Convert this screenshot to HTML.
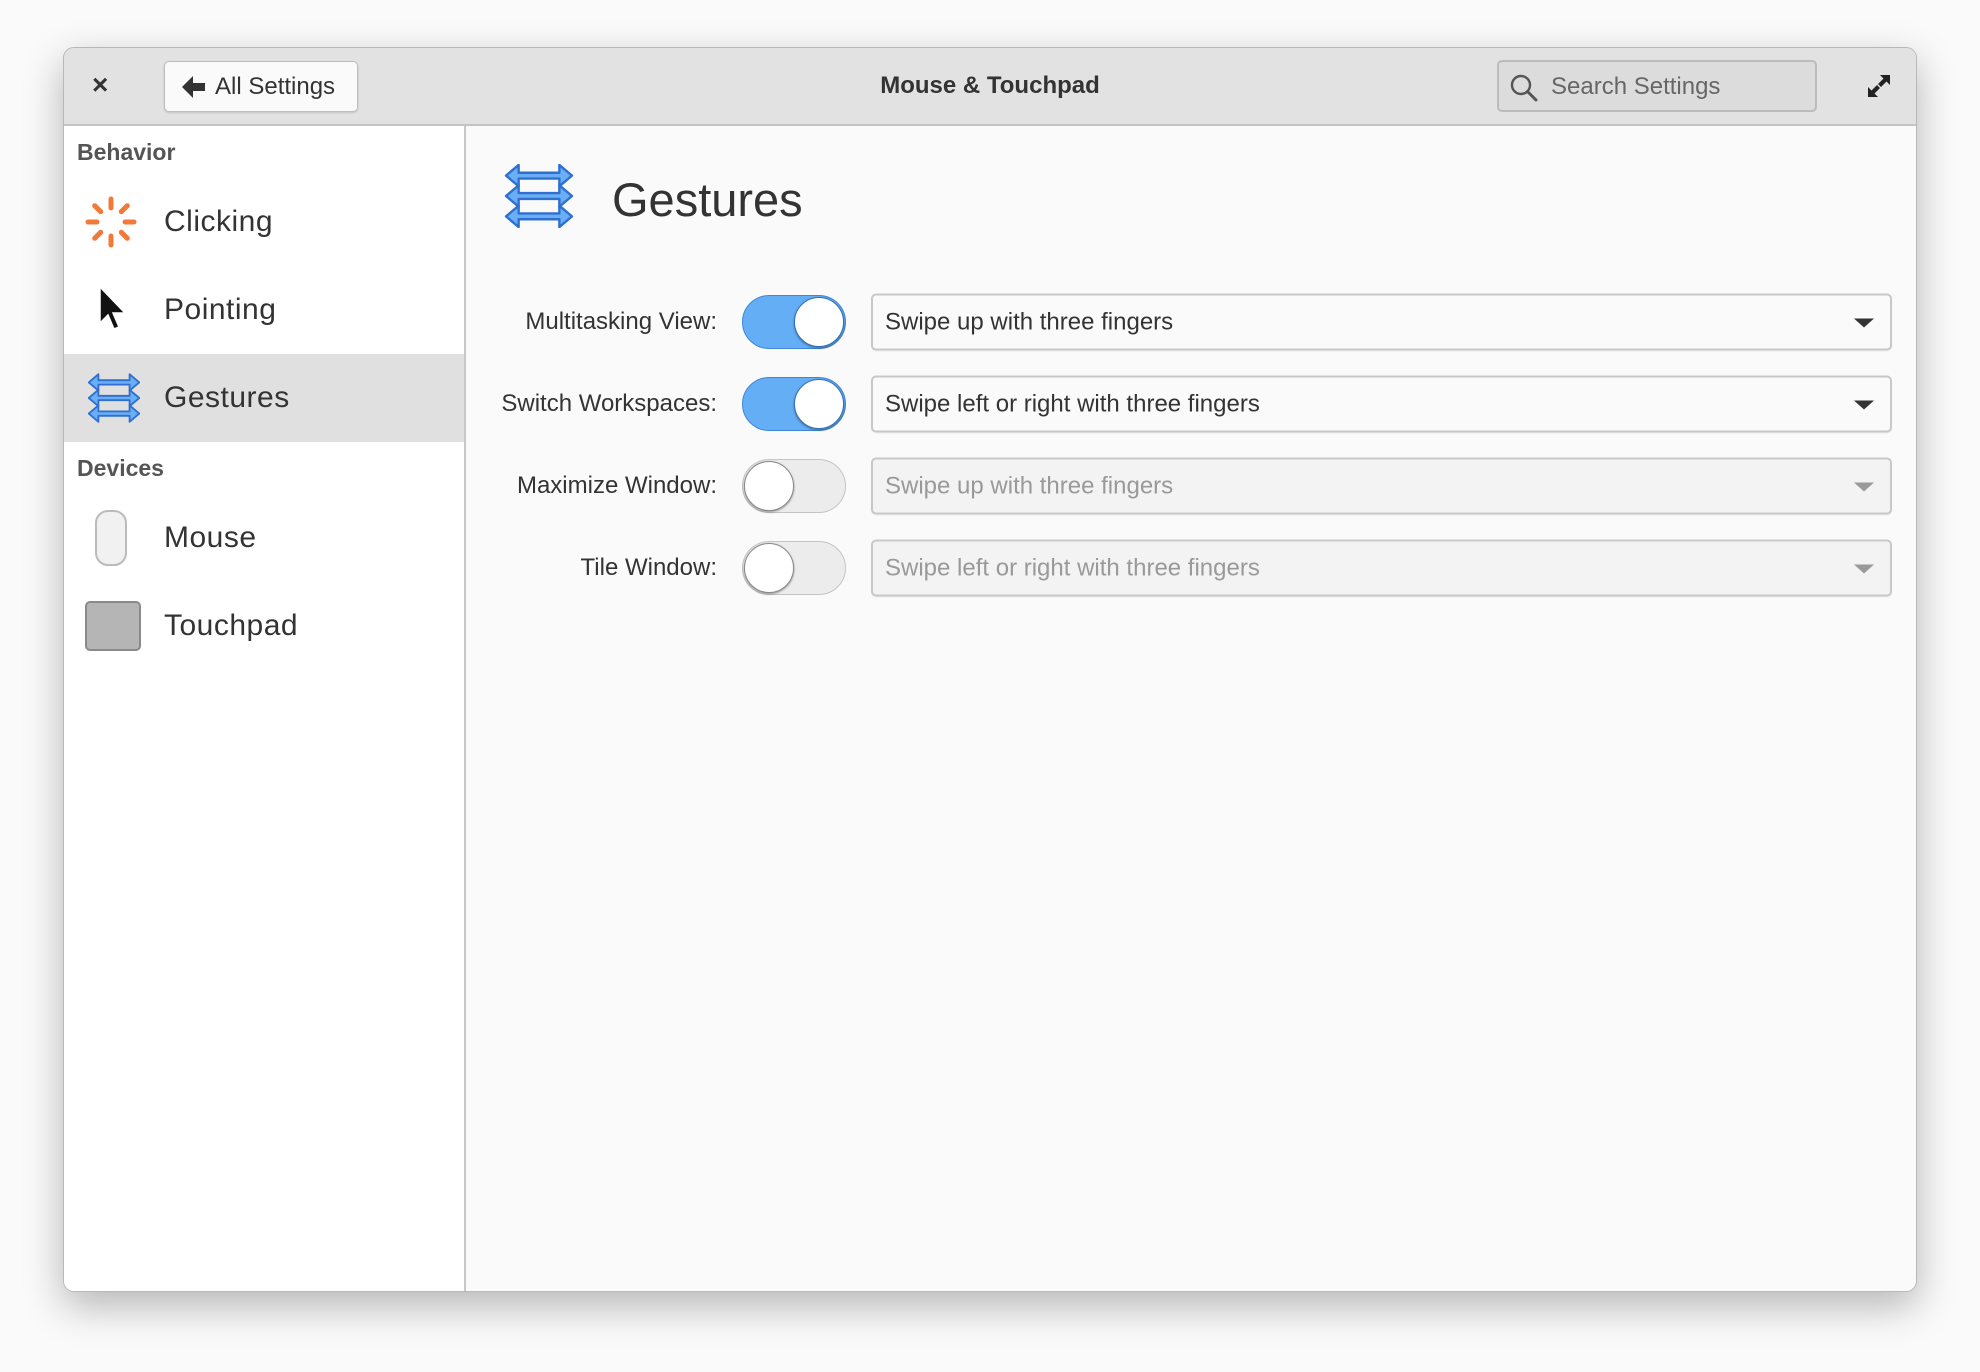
<!DOCTYPE html>
<html><head><meta charset="utf-8"><style>
*{box-sizing:border-box;margin:0;padding:0}
body{width:1980px;height:1372px;background:#fafafa;font-family:"Liberation Sans",sans-serif;position:relative;overflow:hidden;color:#333}
.win{position:absolute;left:63px;top:47px;width:1854px;height:1245px;border-radius:11px;background:#fafafa;border:1px solid #b8b8b8;box-shadow:0 14px 40px rgba(0,0,0,.28);overflow:hidden}
.title{position:absolute;left:0;top:0;width:100%;height:78px;background:#e2e2e2;border-bottom:2px solid #c4c4c4}
.abs{position:absolute}
.side{position:absolute;left:0;top:78px;width:402px;bottom:0;background:#fff;border-right:2px solid #c8c8c8}
.hdr{position:absolute;left:13px;font-weight:bold;font-size:23px;color:#555}
.item{position:absolute;left:0;width:400px;height:88px}
.item span{position:absolute;left:100px;top:50%;transform:translateY(-50%);font-size:30px;color:#333;letter-spacing:.5px}
.item .ic{position:absolute;left:20px;top:50%;transform:translateY(-50%)}
.lbl{position:absolute;right:1199px;font-size:24px;color:#333;transform:translateY(-50%)}
.sw{position:absolute;left:678px;width:104px;height:54px;border-radius:27px;transform:translateY(-50%)}
.sw.on{background:#64aef6;border:1px solid #3f86d6}
.sw.off{background:#ececec;border:1px solid #c4c4c4}
.knob{position:absolute;top:1px;width:50px;height:50px;border-radius:50%;background:#fff;box-shadow:0 1px 2px rgba(0,0,0,.4)}
.on .knob{right:1px;border:1px solid #3470b8}
.off .knob{left:1px;border:1px solid #888}
.cb{position:absolute;left:807px;width:1021px;height:57px;border:2px solid #c8c8c8;border-radius:5px;background:#fafafa;transform:translateY(-50%);box-shadow:0 1px 1px rgba(0,0,0,.06)}
.cb span{position:absolute;left:12px;top:50%;transform:translateY(-50%);font-size:24px;color:#333}
.cb i{position:absolute;right:16px;top:23px;width:0;height:0;border-left:10px solid transparent;border-right:10px solid transparent;border-top:9px solid #333}
.cb.dis{background:#f3f3f3}
.cb.dis span{color:#999}
.cb.dis i{border-top-color:#999}
</style></head><body>
<div class="win">
 <div class="title">
  <div class="abs" style="left:28px;top:21px;font-size:28px;font-weight:bold;color:#333">×</div>
  <div class="abs" style="left:100px;top:13px;width:194px;height:51px;background:#fafafa;border:1px solid #bdbdbd;border-radius:5px;box-shadow:0 1px 2px rgba(0,0,0,.15)">
   <svg class="abs" style="left:16px;top:13px" width="26" height="24" viewBox="0 0 26 24"><path d="M12 1 L1 12 L12 23 L12 16 L24 16 L24 8 L12 8 Z" fill="#333"/></svg>
   <span class="abs" style="left:50px;top:11px;font-size:24px;color:#333">All Settings</span>
  </div>
  <div class="abs" style="left:0;width:100%;top:24px;text-align:center;font-size:24px;font-weight:bold;color:#333">Mouse &amp; Touchpad</div>
  <div class="abs" style="left:1433px;top:12px;width:320px;height:52px;background:#dcdcdc;border:2px solid #bcbcbc;border-radius:5px">
   <svg class="abs" style="left:10px;top:11px" width="30" height="30" viewBox="0 0 30 30"><circle cx="12" cy="12" r="9" fill="none" stroke="#555" stroke-width="2.4"/><path d="M18.5 18.5 L27 27" stroke="#555" stroke-width="3" stroke-linecap="round"/></svg>
   <span class="abs" style="left:52px;top:11px;font-size:24px;color:#666">Search Settings</span>
  </div>
  <svg class="abs" style="left:1802px;top:25px" width="26" height="26" viewBox="0 0 26 26"><path d="M14 2 L24 2 L24 12 L20.5 8.5 L15 14 L12 11 L17.5 5.5 Z M12 24 L2 24 L2 14 L5.5 17.5 L11 12 L14 15 L8.5 20.5 Z" fill="#222"/></svg>
 </div>
 <div class="side">
  <div class="hdr" style="top:13px">Behavior</div>
  <div class="item" style="top:52px">
   <svg class="ic" width="54" height="54" viewBox="0 0 54 54"><g stroke="#f07a3a" stroke-width="5" stroke-linecap="round"><path d="M27 4v9M27 41v9M4 27h9M41 27h9M10.7 10.7l6 6M37.3 37.3l6 6M43.3 10.7l-6 6M16.7 37.3l-6 6"/></g></svg>
   <span>Clicking</span></div>
  <div class="item" style="top:140px">
   <svg class="ic" style="left:34px" width="34" height="50" viewBox="0 0 34 50"><path d="M2 2 L2 38 L10 30 L16 44 L21 42 L15 28 L27 28 Z" fill="#111" stroke="#fff" stroke-width="1.5"/></svg>
   <span>Pointing</span></div>
  <div class="item" style="top:228px;background:#e0e0e0">
   <svg class="ic" style="left:24px" width="52" height="50" viewBox="0 0 70 66"><g fill="#6aaef5" stroke="#2f6fcf" stroke-width="2.5" stroke-linejoin="round"><path d="M14 1L1 12L14 23V15H56V23L69 12L56 1V9H14Z"/><path d="M14 22L1 33L14 44V36H56V44L69 33L56 22V30H14Z"/><path d="M14 43L1 54L14 65V57H56V65L69 54L56 43V51H14Z"/></g></svg>
   <span>Gestures</span></div>
  <div class="hdr" style="top:329px">Devices</div>
  <div class="item" style="top:368px">
   <svg class="ic" style="left:30px" width="34" height="58" viewBox="0 0 34 58"><rect x="2" y="2" width="30" height="54" rx="12" fill="#f1f1f1" stroke="#bbb" stroke-width="2"/></svg>
   <span>Mouse</span></div>
  <div class="item" style="top:456px">
   <svg class="ic" style="left:20px" width="58" height="52" viewBox="0 0 58 52"><rect x="2" y="2" width="54" height="48" rx="4" fill="#b5b5b5" stroke="#8a8a8a" stroke-width="2"/></svg>
   <span>Touchpad</span></div>
 </div>
 <svg class="abs" style="left:440px;top:116px" width="70" height="64" viewBox="0 0 70 66"><g fill="#6aaef5" stroke="#2f6fcf" stroke-width="2.5" stroke-linejoin="round"><path d="M14 1L1 12L14 23V15H56V23L69 12L56 1V9H14Z"/><path d="M14 22L1 33L14 44V36H56V44L69 33L56 22V30H14Z"/><path d="M14 43L1 54L14 65V57H56V65L69 54L56 43V51H14Z"/></g></svg>
 <div class="abs" style="left:548px;top:124px;font-size:47px;color:#333">Gestures</div>

 <div class="lbl" style="top:274px">Multitasking View:</div>
 <div class="sw on" style="top:274px"><div class="knob"></div></div>
 <div class="cb" style="top:274px"><span>Swipe up with three fingers</span><i></i></div>

 <div class="lbl" style="top:356px">Switch Workspaces:</div>
 <div class="sw on" style="top:356px"><div class="knob"></div></div>
 <div class="cb" style="top:356px"><span>Swipe left or right with three fingers</span><i></i></div>

 <div class="lbl" style="top:438px">Maximize Window:</div>
 <div class="sw off" style="top:438px"><div class="knob"></div></div>
 <div class="cb dis" style="top:438px"><span>Swipe up with three fingers</span><i></i></div>

 <div class="lbl" style="top:520px">Tile Window:</div>
 <div class="sw off" style="top:520px"><div class="knob"></div></div>
 <div class="cb dis" style="top:520px"><span>Swipe left or right with three fingers</span><i></i></div>
</div>
</body></html>
